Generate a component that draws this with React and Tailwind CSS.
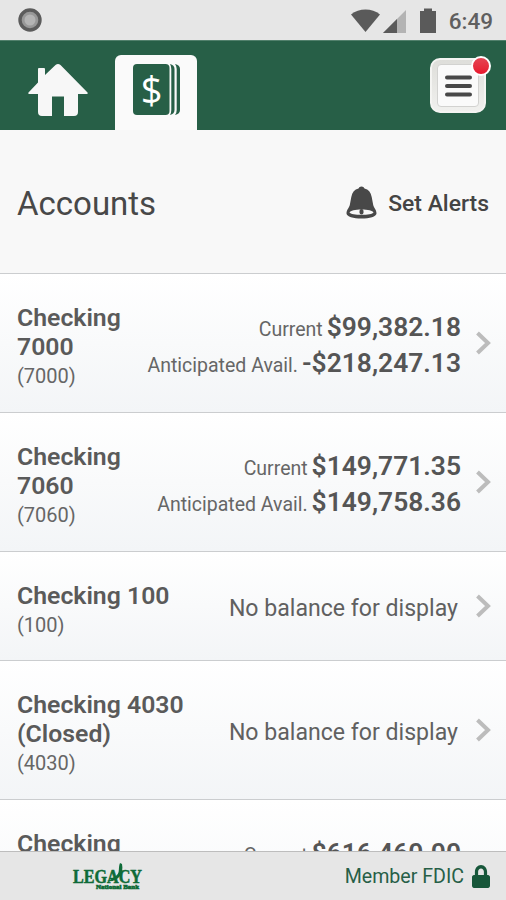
import { FaLock } from "react-icons/fa";

const accounts = [
  {
    name: ["Checking", "7000"],
    number: "7000",
    balances: [
      { label: "Current", amount: "$99,382.18" },
      { label: "Anticipated Avail.", amount: "-$218,247.13" },
    ],
  },
  {
    name: ["Checking", "7060"],
    number: "7060",
    balances: [
      { label: "Current", amount: "$149,771.35" },
      { label: "Anticipated Avail.", amount: "$149,758.36" },
    ],
  },
  { name: ["Checking 100"], number: "100" },
  { name: ["Checking 4030", "(Closed)"], number: "4030" },
  {
    name: ["Checking"],
    balances: [{ label: "Current", amount: "$616,460.00" }],
  },
];

function StatusBar() {
  return (
    <div className="flex h-10 shrink-0 items-center bg-[#e6e6e6] pr-[13px] pl-[18px]">
      <svg width="24" height="24" viewBox="0 0 24 24">
        <circle cx="12" cy="12" r="10" fill="#989898" stroke="#5c5c5c" strokeWidth="3.4" />
        <circle cx="12" cy="12" r="5.5" fill="#b4b4b4" />
      </svg>
      <svg className="ml-auto" width="88" height="26" viewBox="0 0 88 26" fill="#5a5a5a">
        <path d="M1 7.500C9 .8 22 .8 30 7.500L15.500 25Z" />
        <path d="M33 26L56 3v23Z" fill="#b3b3b3" />
        <path d="M33 26L47 12v14Z" />
        <path d="M70 4h4V1.500h8V4h4v22H70Z" />
      </svg>
      <span className="ml-[11px] pt-[2px] text-[22.500px] leading-none font-medium text-[#5f5f5f]">6:49</span>
    </div>
  );
}

function HomeIcon() {
  return (
    <svg width="62" height="54" viewBox="0 0 62 54" fill="#f7f7f7">
      <path d="M11 5q0-1 1-1h5q1 0 1 1v6L28.500 1Q31-1 33.500 1L60.500 28.500q1 1.500-1 1.500H51v18q0 4-4 4H37V32.500H25V52H15q-4 0-4-4V30H2.500q-2 0-1-1.500L11 18.500Z" />
    </svg>
  );
}

function CashIcon() {
  return (
    <svg width="48" height="52" viewBox="0 0 48 52" fill="#275f47">
      <rect x="0" y="0" width="36.5" height="51" rx="4" />
      <path d="M37 0q4.500 1 4.500 5v41q0 4-4.500 5q1.300-2 1.300-5V5q0-3-1.300-5Z" />
      <path d="M42 0q5 1 5 5v41q0 4-5 5q1.700-2 1.700-5V5q0-3-1.700-5Z" />
      <text x="18.500" y="39.500" textAnchor="middle" fontFamily="Open Sans" fontSize="38" fill="#fff">$</text>
    </svg>
  );
}

function MenuIcon() {
  return (
    <svg width="27" height="22" viewBox="0 0 27 22" stroke="#484848" strokeWidth="4" strokeLinecap="round">
      <path d="M2 2.500h23M2 11h23M2 19.500h23" />
    </svg>
  );
}

function BellIcon() {
  return (
    <svg width="31" height="33" viewBox="0 0 31 33">
      <path d="M15.500.5c1.600 0 2.400.8 3 2 4 1 6.300 3.800 7.200 8.500l1.500 8c.7 3 3.300 4.500 3.300 8.500 0 3-7 5-15 5s-15-2-15-5c0-4 2.600-5.500 3.300-8.500l1.500-8c.9-4.700 3.200-7.500 7.200-8.500.6-1.200 1.400-2 3-2Z" fill="#484848" />
      <path d="M3.500 26.500c1-2 5.500-3 12-3s11 1 12 3c-1 1.600-6 2.300-12 2.300s-11-.7-12-2.300Z" fill="#f8f8f8" />
      <rect x="13.500" y="23" width="4" height="5.500" rx="2" fill="#484848" />
    </svg>
  );
}

function Header() {
  return (
    <div className="flex h-[90px] shrink-0 items-end border-t border-[#52806c] bg-[#275f47]">
      <div className="mb-[12px] ml-[27px]">
        <HomeIcon />
      </div>
      <div className="ml-[26px] flex h-[75px] w-[82px] justify-center rounded-t-md bg-[#fafafa] pt-[9px] pl-[2px]">
        <CashIcon />
      </div>
      <div className="relative mr-[20px] mb-[17px] ml-auto flex h-[55px] w-[56px] items-center justify-center rounded-[10px] border-2 border-[#f4f4f2] bg-linear-to-b from-[#dededa] to-[#f0f0ee]">
        <div className="flex h-[43px] w-[42px] items-center justify-center rounded-[4px] border border-[#d2d2d0] bg-[#fafafa]">
          <MenuIcon />
        </div>
        <span className="absolute -top-[4px] -right-[7px] h-[20px] w-[20px] rounded-full border-2 border-white bg-linear-to-b from-[#e54352] to-[#e8132c]" />
      </div>
    </div>
  );
}

function Chevron() {
  return (
    <svg width="15" height="24" viewBox="0 0 15 24" fill="none" stroke="#bcbcbc" strokeWidth="4">
      <path d="M1.500 2L12 12L1.500 22" />
    </svg>
  );
}

function AccountRow({ account }) {
  // single-line accounts without a balance use the shorter row
  const height = account.balances || account.name.length > 1 ? "h-[139px]" : "h-[109px]";

  return (
    <div className={`flex shrink-0 border-t border-[#cbcdcf] bg-linear-to-b from-white to-[#f3f5f7] pr-[15px] pl-[17px] ${height}`}>
      <div className="pt-[29px] text-[#5a5a5a]">
        {account.name.map((line) => (
          <div key={line} className="text-[24.800px] leading-[29px] font-semibold whitespace-nowrap">
            {line}
          </div>
        ))}
        {account.number && (
          <div className="text-[20px] leading-[30px] text-[#666]">({account.number})</div>
        )}
      </div>
      {account.balances ? (
        <div className="ml-auto pt-[35px] text-right whitespace-nowrap">
          {account.balances.map((b) => (
            <div key={b.label} className="h-9 leading-9">
              <span className="text-[19.500px] text-[#666]">{b.label}</span>{" "}
              <span className="text-[26.400px] font-semibold text-[#555]">{b.amount}</span>
            </div>
          ))}
        </div>
      ) : (
        <div className="mr-[3px] ml-auto self-center pt-[6px] text-[23.100px] text-[#606060]">
          No balance for display
        </div>
      )}
      <div className="ml-[15px] self-center">
        <Chevron />
      </div>
    </div>
  );
}

function LegacyLogo() {
  return (
    <svg width="72" height="30" viewBox="0 0 72 30" fill="#0f6b38" fontFamily="Liberation Serif" fontWeight="bold">
      <text x="1" y="21.500" fontSize="18" textLength="69" lengthAdjust="spacingAndGlyphs" stroke="#0f6b38" strokeWidth=".5">LEGACY</text>
      <text x="24" y="28" fontSize="7" textLength="43" lengthAdjust="spacingAndGlyphs" stroke="#0f6b38" strokeWidth=".7">National Bank</text>
      <path d="M35 20c4-1 7-4 10-6 3-3 1-7 3-12l2 1c1 5 0 9-2 12-3 4-8 6-13 5Z" />
    </svg>
  );
}

function Footer() {
  return (
    <div className="flex h-[49px] shrink-0 items-center border-t border-[#bdbdbd] bg-[#e6e6e6] pr-[16px] pl-[72px]">
      <LegacyLogo />
      <span className="ml-auto pt-[2px] text-[19.600px] text-[#275f47]">Member FDIC</span>
      <FaLock className="ml-[8px] h-[23px] w-[18px] text-[#17573a]" preserveAspectRatio="none" />
    </div>
  );
}

export default function App() {
  return (
    <div className="flex h-[900px] w-[506px] flex-col overflow-hidden bg-white font-['Roboto',sans-serif]">
      <StatusBar />
      <Header />
      <div className="flex h-[143px] shrink-0 items-center justify-between bg-[#f8f8f8] pr-[17px] pl-[17px]">
        <h1 className="pt-[4px] text-[33px] text-[#484848]">Accounts</h1>
        <div className="flex items-center gap-[11px] pt-[2px]">
          <BellIcon />
          <span className="pt-[4px] text-[22.900px] font-medium text-[#444]">Set Alerts</span>
        </div>
      </div>
      <div className="flex min-h-0 flex-1 flex-col overflow-hidden">
        {accounts.map((account, i) => (
          <AccountRow key={i} account={account} />
        ))}
      </div>
      <Footer />
    </div>
  );
}
